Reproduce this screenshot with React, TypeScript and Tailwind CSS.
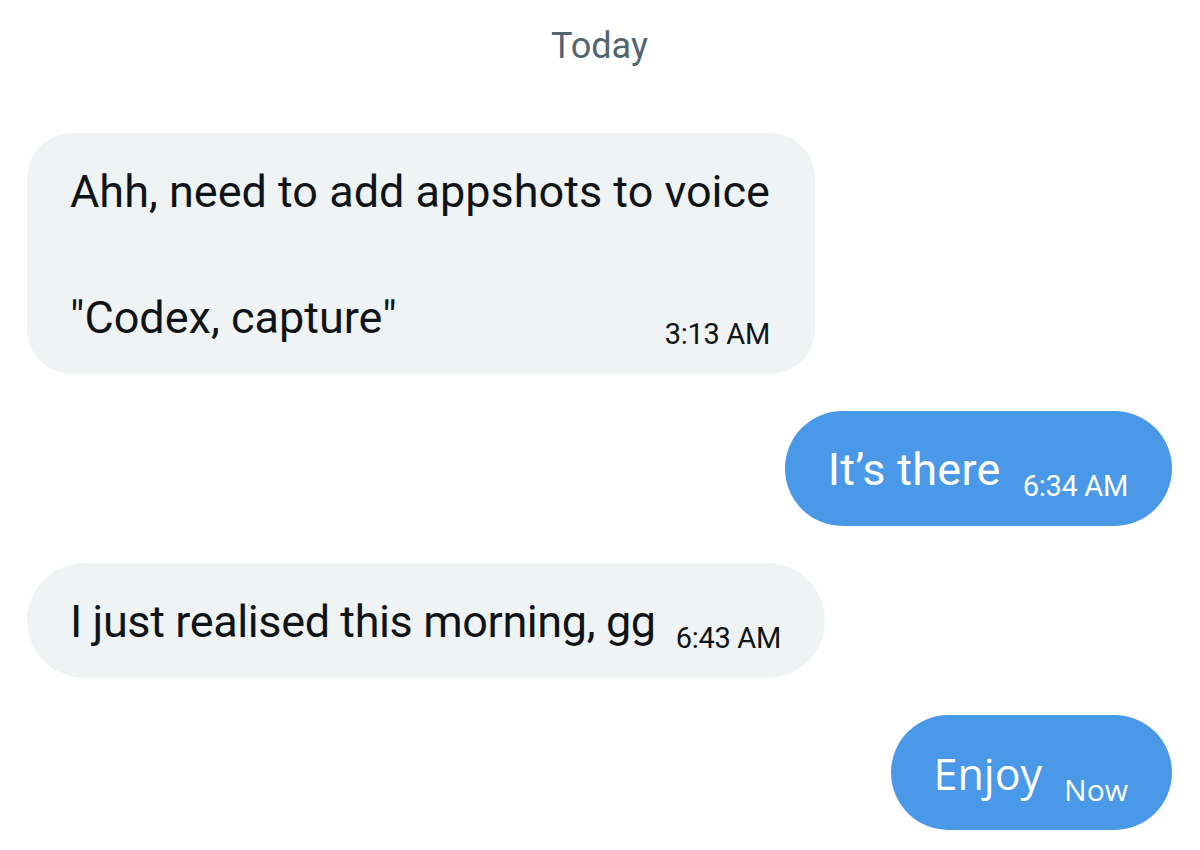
type Msg = {
  side: "in" | "out";
  lines: string[];
  time: string;
  font?: string;
};

const messages: Msg[] = [
  { side: "in", lines: ["Ahh, need to add appshots to voice", "", "\"Codex, capture\""], time: "3:13 AM" },
  { side: "out", lines: ["It’s there"], time: "6:34 AM" },
  { side: "in", lines: ["I just realised this morning, gg"], time: "6:43 AM" },
  { side: "out", lines: ["Enjoy"], time: "Now", font: "font-['Open_Sans',sans-serif]" },
];

function Bubble({ msg }: { msg: Msg }) {
  const incoming = msg.side === "in";
  const multi = msg.lines.length > 1;
  const bubble = incoming
    ? "bg-[#eff3f4] text-[#0f1419]"
    : "bg-[#4a99e9] text-white";

  // multi-line message: timestamp pinned to the right of the last line
  if (multi) {
    const last = msg.lines[msg.lines.length - 1];
    return (
      <div className={`self-start rounded-[45px] pl-[43px] pr-[45px] pt-[27px] pb-[25px] ${bubble}`}>
        {msg.lines.slice(0, -1).map((l, i) => (
          <div key={i} className="text-[45px] leading-[63px] h-[63px] whitespace-nowrap">
            {l}
          </div>
        ))}
        <div className="flex items-baseline justify-between">
          <span className="text-[45px] leading-[63px]">{last}</span>
          <span className="text-[29px] leading-[34px] tracking-[-0.3px] translate-y-[11px]">{msg.time}</span>
        </div>
      </div>
    );
  }

  const textCls = msg.font
    ? "text-[43px]"
    : incoming
      ? "text-[45px] tracking-[-0.4px]"
      : "text-[45px] tracking-[0.3px]";
  const timeSize = msg.font ? "text-[30px]" : "text-[29px] tracking-[-0.3px]";
  return (
    <div
      className={`${incoming ? "self-start" : "self-end"} h-[115px] rounded-full pl-[43px] pr-[44px] flex items-center ${bubble} ${msg.font ?? ""}`}
    >
      <div className={`flex items-baseline ${incoming ? "gap-[20px]" : "gap-[22px]"} pt-[2px]`}>
        <span className={`${textCls} leading-[52px] whitespace-nowrap`}>{msg.lines[0]}</span>
        <span className={`${timeSize} leading-[34px] translate-y-[11px]`}>{msg.time}</span>
      </div>
    </div>
  );
}

export default function App() {
  return (
    <div className="w-[1200px] h-[850px] bg-white font-['Roboto',sans-serif] flex flex-col pl-[27px] pr-[28px] overflow-hidden">
      <div className="text-center text-[36px] leading-[44px] text-[#536471] pt-[24px] pb-[65px]">
        Today
      </div>
      <div className="flex flex-col gap-[37px]">
        {messages.map((m, i) => (
          <Bubble key={i} msg={m} />
        ))}
      </div>
    </div>
  );
}
